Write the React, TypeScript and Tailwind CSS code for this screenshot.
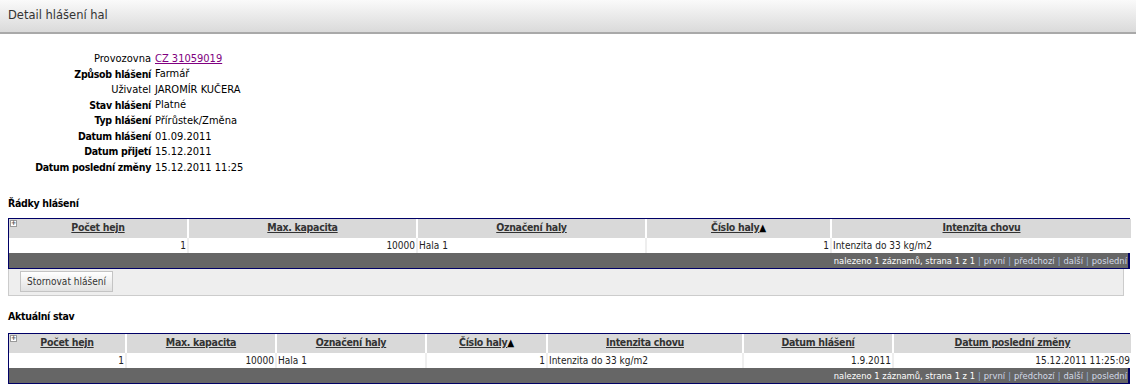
import React from 'react'

const DETAILS = [
  { label: 'Provozovna', value: 'CZ 31059019', bold: false, link: true },
  { label: 'Způsob hlášení', value: 'Farmář', bold: true },
  { label: 'Uživatel', value: 'JAROMÍR KUČERA', bold: false },
  { label: 'Stav hlášení', value: 'Platné', bold: true },
  { label: 'Typ hlášení', value: 'Přírůstek/Změna', bold: true },
  { label: 'Datum hlášení', value: '01.09.2011', bold: true },
  { label: 'Datum přijetí', value: '15.12.2011', bold: true },
  { label: 'Datum poslední změny', value: '15.12.2011 11:25', bold: true },
]

type Col = { title: string; width: string; sort?: boolean; align: 'right' | 'left' }

const ROWS_COLS: Col[] = [
  { title: 'Počet hejn', width: 'w-[179px]', align: 'right' },
  { title: 'Max. kapacita', width: 'w-[229px]', align: 'right' },
  { title: 'Označení haly', width: 'w-[229px]', align: 'left' },
  { title: 'Číslo haly', width: 'w-[185px]', sort: true, align: 'right' },
  { title: 'Intenzita chovu', width: 'w-[300px]', align: 'left' },
]
const ROWS_DATA = ['1', '10000', 'Hala 1', '1', 'Intenzita do 33 kg/m2']

const STATE_COLS: Col[] = [
  { title: 'Počet hejn', width: 'w-[117px]', align: 'right' },
  { title: 'Max. kapacita', width: 'w-[150px]', align: 'right' },
  { title: 'Označení haly', width: 'w-[150px]', align: 'left' },
  { title: 'Číslo haly', width: 'w-[121px]', sort: true, align: 'right' },
  { title: 'Intenzita chovu', width: 'w-[196px]', align: 'left' },
  { title: 'Datum hlášení', width: 'w-[150px]', align: 'right' },
  { title: 'Datum poslední změny', width: 'w-[238px]', align: 'right' },
]
const STATE_DATA = ['1', '10000', 'Hala 1', '1', 'Intenzita do 33 kg/m2', '1.9.2011', '15.12.2011 11:25:09']

function Pager() {
  const links = ['první', 'předchozí', 'další', 'poslední']
  return (
    <div className="flex justify-end items-center h-[15px] pr-[1px] text-[9.3px] text-white leading-none">
      <span>nalezeno 1 záznamů, strana 1 z 1</span>
      {links.map((l) => (
        <React.Fragment key={l}>
          <span className="text-[#8fb4e0] px-[3px]">|</span>
          <a href="#" className="text-[#d4dbe8]">{l}</a>
        </React.Fragment>
      ))}
    </div>
  )
}

function DataTable({ cols, data }: { cols: Col[]; data: string[] }) {
  return (
    <div className="border border-[#000066] border-r-2 w-[1122px]">
      <table className="w-full table-fixed border-collapse">
        <thead>
          <tr className="bg-[#d9d9d9] h-[19px]">
            {cols.map((c, i) => (
              <th
                key={c.title}
                className={`${c.width} relative p-0 text-center font-bold text-[10.5px] tracking-[-0.3px] text-[#333] ${i < cols.length - 1 ? 'border-r-2 border-white' : ''}`}
              >
                {i === 0 && (
                  <span className="absolute left-[1px] top-[1px] w-[7px] h-[7px] border border-[#999] bg-white text-[7px] leading-[5px] text-[#555] flex items-center justify-center">+</span>
                )}
                <a href="#" className="underline">{c.title}</a>
                {c.sort && <span className="text-[10px] text-black">▲</span>}
              </th>
            ))}
          </tr>
        </thead>
        <tbody>
          <tr className="bg-white h-[15px]">
            {cols.map((c, i) => (
              <td
                key={c.title}
                className={`p-0 px-[1px] text-[10px] text-[#222] ${c.align === 'right' ? 'text-right' : 'text-left'} ${i < cols.length - 1 ? 'border-r-2 border-[#eeeeee]' : ''}`}
              >
                {data[i]}
              </td>
            ))}
          </tr>
        </tbody>
      </table>
      <div className="bg-[#666666]">
        <Pager />
      </div>
    </div>
  )
}

export default function App() {
  return (
    <div className="w-[1136px] h-[390px] bg-white text-[11px] text-black" style={{ fontFamily: '"DejaVu Sans Condensed", "DejaVu Sans", sans-serif' }}>
      <div className="h-[34px] bg-gradient-to-b from-[#fafafa] to-[#dadada] border-b-2 border-[#a9a9a9] flex items-center px-[8px] pb-[1px] text-[11.5px] text-[#333]" style={{ fontFamily: '"DejaVu Sans", sans-serif' }}>
        Detail hlášení hal
      </div>

      <div className="pt-[17px] pl-[8px]">
        {DETAILS.map((d) => (
          <div key={d.label} className="flex h-[15.6px] items-center">
            <div className={`w-[143px] text-right ${d.bold ? 'font-bold text-[10.5px] tracking-[-0.3px]' : ''}`}>{d.label}</div>
            <div className="pl-[4px]">
              {d.link ? (
                <a href="#" className="text-[#800080] underline">{d.value}</a>
              ) : (
                d.value
              )}
            </div>
          </div>
        ))}
      </div>

      <div className="px-[8px]">
        <div className="mt-[20px] h-[16px] font-bold text-[10.5px] tracking-[-0.3px]">Řádky hlášení</div>
        <div className="mt-[6px]">
          <DataTable cols={ROWS_COLS} data={ROWS_DATA} />
        </div>
        <div className="w-[1116px] h-[27px] bg-[#eeeeee] border border-t-0 border-[#cccccc] pl-[11px] pt-[2px]">
          <button className="h-[21px] w-[93px] border border-[#c4c4c4] bg-gradient-to-b from-white to-[#e2e2e2] text-[10px] text-[#333]">
            Stornovat hlášení
          </button>
        </div>
        <div className="mt-[13px] h-[16px] font-bold text-[10.5px] tracking-[-0.3px]">Aktuální stav</div>
        <div className="mt-[8px]">
          <DataTable cols={STATE_COLS} data={STATE_DATA} />
        </div>
      </div>
    </div>
  )
}
